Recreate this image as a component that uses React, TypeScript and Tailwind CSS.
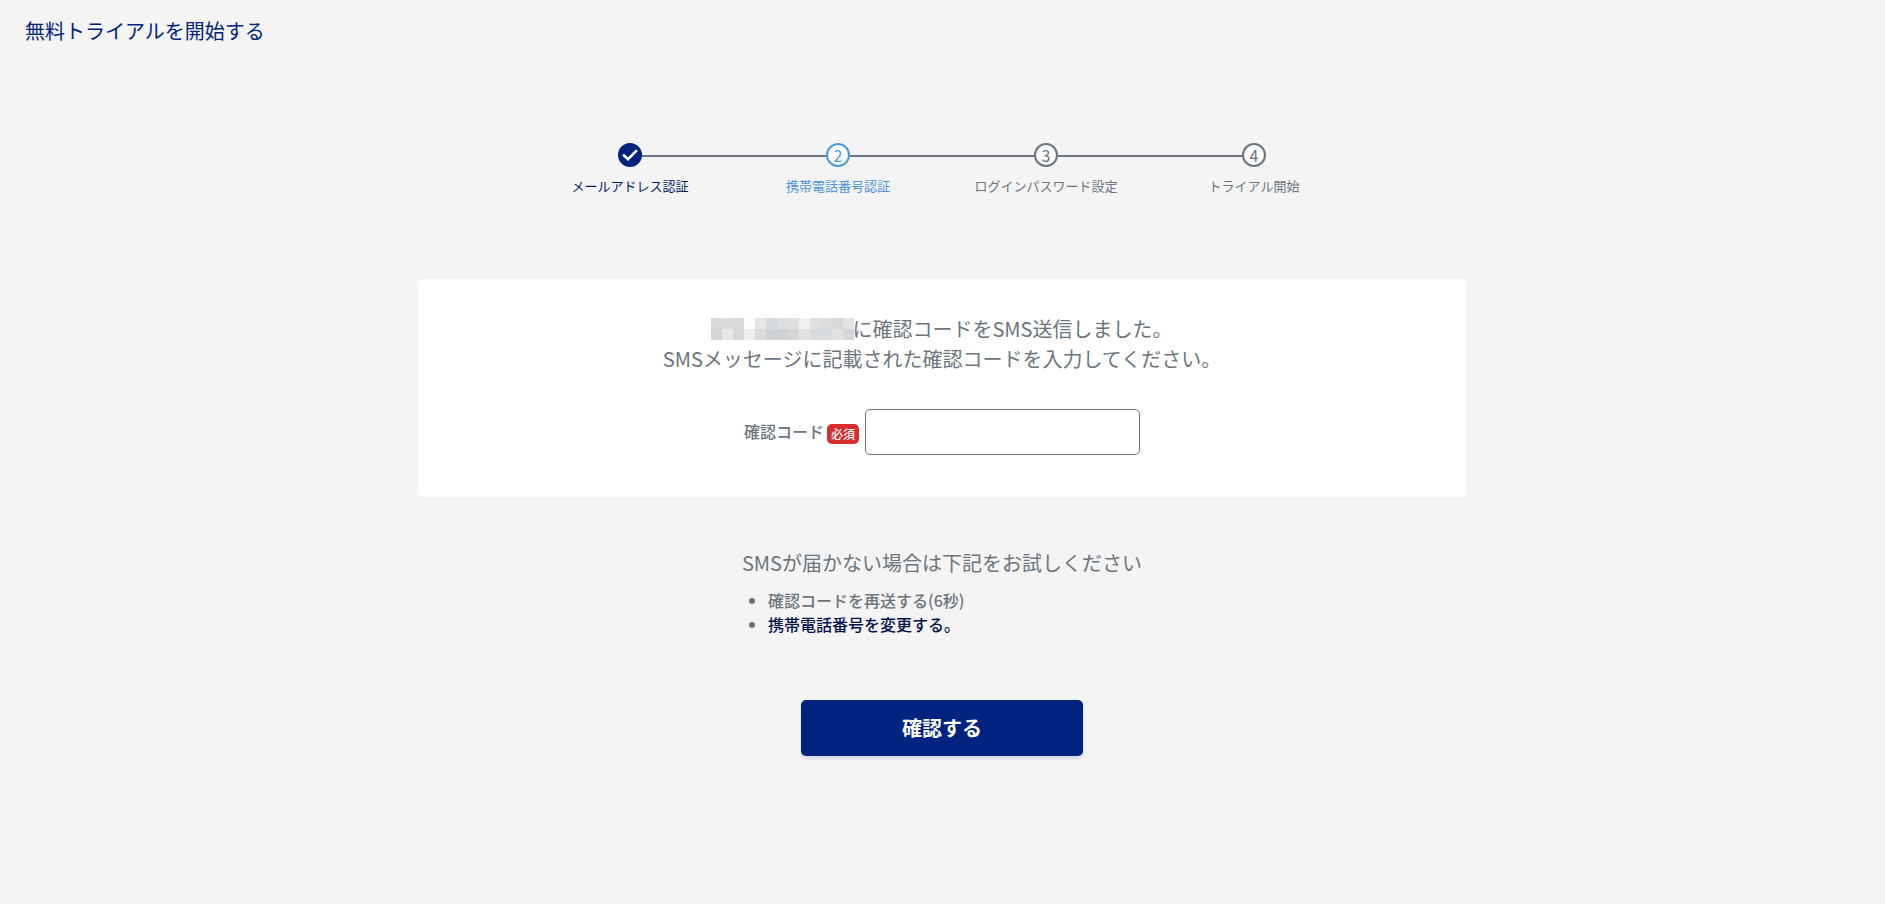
import { clsx } from 'clsx';

type StepState = 'done' | 'current' | 'todo';

const steps: { label: string; state: StepState }[] = [
  { label: 'メールアドレス認証', state: 'done' },
  { label: '携帯電話番号認証', state: 'current' },
  { label: 'ログインパスワード設定', state: 'todo' },
  { label: 'トライアル開始', state: 'todo' },
];

// Masked phone number, one colour per block
const maskRows = [
  ['#d9dadb', '#dadbdc', '#d9dadb', '#fbfcfe', '#e5e7e7', '#d5d8dc', '#dddee0', '#dfe0e1', '#f0f0f0', '#dee1e4', '#dcdddf', '#d6d8da', '#e2e4e5'],
  ['#d3d4d6', '#e6e8eb', '#d7d7d8', '#edeef2', '#d8dadb', '#cfd2d4', '#d0d2d4', '#d3d5d7', '#e2e2e2', '#d7dade', '#d9dcde', '#e1e1e3', '#d5d6d8'],
];

function StepCircle({ state, index }: { state: StepState; index: number }) {
  return (
    <span
      className={clsx(
        'relative flex size-6 items-center justify-center rounded-full border-2 text-base leading-6',
        state === 'done' && 'border-[#00237f] bg-[#00237f] text-white',
        state === 'current' && 'border-[#4a9bdc] bg-white text-[#5b97d8]',
        state === 'todo' && 'border-[#6c757d] bg-white text-[#6c757d]',
      )}
    >
      {state === 'done' ? (
        <svg viewBox="0 0 24 24" className="size-6 shrink-0" fill="none" stroke="currentColor" strokeWidth="2.5">
          <path d="M5.7 12.3 10 16.2 18.3 7.8" strokeLinecap="round" />
        </svg>
      ) : (
        index + 1
      )}
    </span>
  );
}

function Stepper() {
  return (
    <ol className="mx-auto grid w-full max-w-[832px] grid-cols-4">
      {steps.map((step, i) => (
        <li key={step.label} className="relative flex flex-col items-center">
          {i > 0 && <span className="absolute top-3 right-1/2 h-0.5 w-full bg-[#6c757d]" />}
          <span className="z-10">
            <StepCircle state={step.state} index={i} />
          </span>
          <span
            className={clsx(
              'mt-2 text-[13px] leading-[22px]',
              step.state === 'done' && 'text-[#001a66]',
              step.state === 'current' && 'text-[#4a93dc]',
              step.state === 'todo' && 'text-[#6c757d]',
            )}
          >
            {step.label}
          </span>
        </li>
      ))}
    </ol>
  );
}

function MaskedNumber() {
  return (
    <span className="-mt-1.5 -mr-0.5 inline-grid grid-cols-13 align-middle">
      {maskRows.flat().map((color, i) => (
        <span key={i} className="size-[11px]" style={{ backgroundColor: color }} />
      ))}
    </span>
  );
}

export default function App() {
  return (
    <div className="min-h-screen bg-[#f4f4f4] pr-px font-['Noto_Sans_CJK_JP',sans-serif] text-[#6c757d]">
      <header className="px-[25px] py-4">
        <h1 className="text-xl leading-[30px] text-[#00237f]">無料トライアルを開始する</h1>
      </header>

      <main className="mx-auto max-w-[1048px] pt-[81px] pb-12">
        <Stepper />

        <form>
          <section className="mt-[82px] rounded-md bg-white px-8 pt-[35px] pb-[42px] text-center">
            <p className="text-xl leading-[30px]">
              <MaskedNumber />
              に確認コードをSMS送信しました。
              <br />
              SMSメッセージに記載された確認コードを入力してください。
            </p>
            <div className="mt-[35px] flex items-center justify-center">
              <label htmlFor="code" className="flex items-center gap-[3px] font-medium">
                <span className="pb-0.5">確認コード</span>
                <span className="mt-1 rounded-[5px] bg-[#d82c2f] px-1 text-[12px] leading-5 text-white">必須</span>
              </label>
              <input
                id="code"
                type="text"
                className="ml-1.5 h-[46px] w-[275px] rounded-[5px] border border-[#6c757d] bg-white px-3"
              />
            </div>
          </section>

          <section className="mx-auto mt-[51px] w-fit">
            <h2 className="text-xl leading-[30px]">SMSが届かない場合は下記をお試しください</h2>
            <ul className="mt-2.5 list-disc pl-[26px] text-base leading-6 font-medium">
              <li>確認コードを再送する(6秒)</li>
              <li>
                <a href="#phone" className="text-[#00134d]">
                  携帯電話番号を変更する。
                </a>
              </li>
            </ul>
          </section>

          <button
            type="submit"
            className="mx-auto mt-16 block h-14 w-[282px] rounded-[5px] bg-[#00237f] text-xl font-bold text-white shadow-[0_3px_3px_rgba(0,32,127,0.12)]"
          >
            確認する
          </button>
        </form>
      </main>
    </div>
  );
}
